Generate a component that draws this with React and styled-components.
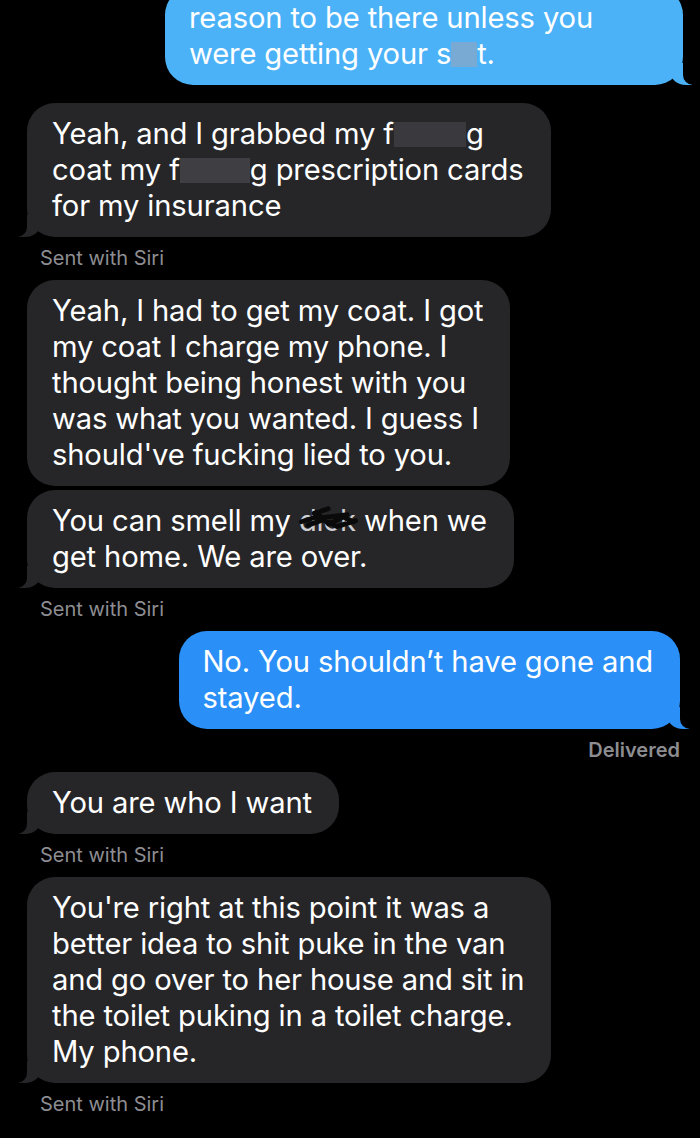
import React from "react";
import styled, { createGlobalStyle, css } from "styled-components";

const Global = createGlobalStyle`
  html, body { margin: 0; padding: 0; background: #000; }
  body { font-family: Inter, "Liberation Sans", "Noto Sans", sans-serif; -webkit-font-smoothing: antialiased; }
`;

const Page = styled.div`
  width: 700px;
  height: 1138px;
  overflow: hidden;
  background: #000;
  box-sizing: border-box;
  padding: 0 20px 0 27px;
`;

const Thread = styled.div`
  display: flex;
  flex-direction: column;
  margin-top: -13px;
`;

const tones = {
  them: "#262629",
  me: "#2a8ff6",
  meLight: "#4bb2f8",
};

const Bubble = styled.div`
  position: relative;
  box-sizing: border-box;
  width: fit-content;
  min-width: ${(p) => p.$minWidth || 0}px;
  padding: 13px 27px 13px ${(p) => (p.$tone === "them" ? 25 : 24)}px;
  border-radius: 28px;
  background: ${(p) => tones[p.$tone]};
  color: #fff;
  font-size: 29.2px;
  line-height: 36px;
  letter-spacing: -0.15px;
  align-self: ${(p) => (p.$tone === "them" ? "flex-start" : "flex-end")};
  margin-top: ${(p) => p.$gap || 0}px;
  ${(p) => p.$offset && css`margin-right: ${p.$offset}px;`}

  ${(p) =>
    p.$tail &&
    (p.$tone === "them"
      ? css`
          &::before {
            content: "";
            position: absolute;
            bottom: 0;
            left: -8px;
            width: 22px;
            height: 22px;
            background: ${tones[p.$tone]};
            border-bottom-right-radius: 16px 14px;
          }
          &::after {
            content: "";
            position: absolute;
            bottom: 0;
            left: -12px;
            width: 12px;
            height: 22px;
            background: #000;
            border-bottom-right-radius: 10px;
          }
        `
      : css`
          &::before {
            content: "";
            position: absolute;
            bottom: 0;
            right: -9px;
            width: 22px;
            height: 22px;
            background: ${tones[p.$tone]};
            border-bottom-left-radius: 16px 14px;
          }
          &::after {
            content: "";
            position: absolute;
            bottom: 0;
            right: -13px;
            width: 13px;
            height: 22px;
            background: #000;
            border-bottom-left-radius: 10px;
          }
        `)}
`;

const Line = styled.span`
  display: block;
  white-space: nowrap;
  position: relative;
  z-index: 1;
`;

const Censor = styled.span`
  display: inline-block;
  width: ${(p) => p.$w}px;
  height: 25px;
  vertical-align: -3px;
  background: ${(p) => p.$color};
`;

const Scribbled = styled.span`
  position: relative;
  display: inline-block;
  color: #cfcfd2;
`;

const ScribbleMark = styled.svg`
  position: absolute;
  left: -2px;
  top: 2px;
  width: calc(100% + 6px);
  height: 100%;
  overflow: visible;
`;

const Meta = styled.div`
  padding: 10px 0 0;
  margin-bottom: 11px;
  font-size: 20px;
  line-height: 22px;
  color: #8d8d92;
  font-weight: ${(p) => (p.$bold ? 600 : 400)};
  align-self: ${(p) => (p.$right ? "flex-end" : "flex-start")};
  margin-left: ${(p) => (p.$right ? 0 : 13)}px;
`;

function Scribble({ children }) {
  return (
    <Scribbled>
      {children}
      <ScribbleMark viewBox="0 0 60 30" preserveAspectRatio="none">
        <path
          d="M4 14 L22 9 L30 16 L44 10 L54 14 M10 17 L26 12 L38 18 L56 13 M16 7 L30 3 M20 11 L48 8"
          stroke="#0a0a0a"
          strokeWidth="4"
          fill="none"
          strokeLinecap="round"
          strokeLinejoin="round"
        />
      </ScribbleMark>
    </Scribbled>
  );
}

export default function App() {
  return (
    <>
      <Global />
      <Page>
        <Thread>
          <Bubble $tone="meLight" $tail $offset={-3} $minWidth={518}>
            <Line>reason to be there unless you</Line>
            <Line>
              were getting your s<Censor $w={26} $color="#78aad4" />t.
            </Line>
          </Bubble>

          <Bubble $tone="them" $tail $gap={18}>
            <Line>
              Yeah, and I grabbed my f<Censor $w={72} $color="#3a3a3e" />g
            </Line>
            <Line>
              coat my f<Censor $w={70} $color="#3e3e43" />g prescription cards
            </Line>
            <Line>for my insurance</Line>
          </Bubble>
          <Meta>Sent with Siri</Meta>

          <Bubble $tone="them">
            <Line>Yeah, I had to get my coat. I got</Line>
            <Line>my coat I charge my phone. I</Line>
            <Line>thought being honest with you</Line>
            <Line>was what you wanted. I guess I</Line>
            <Line>should've fucking lied to you.</Line>
          </Bubble>
          <Bubble $tone="them" $tail $gap={4}>
            <Line>
              You can smell my <Scribble>dick</Scribble> when we
            </Line>
            <Line>get home. We are over.</Line>
          </Bubble>
          <Meta>Sent with Siri</Meta>

          <Bubble $tone="me" $tail>
            <Line>No. You shouldn’t have gone and</Line>
            <Line>stayed.</Line>
          </Bubble>
          <Meta $right $bold>Delivered</Meta>

          <Bubble $tone="them" $tail>
            <Line>You are who I want</Line>
          </Bubble>
          <Meta>Sent with Siri</Meta>

          <Bubble $tone="them" $tail>
            <Line>You're right at this point it was a</Line>
            <Line>better idea to shit puke in the van</Line>
            <Line>and go over to her house and sit in</Line>
            <Line>the toilet puking in a toilet charge.</Line>
            <Line>My phone.</Line>
          </Bubble>
          <Meta>Sent with Siri</Meta>
        </Thread>
      </Page>
    </>
  );
}
